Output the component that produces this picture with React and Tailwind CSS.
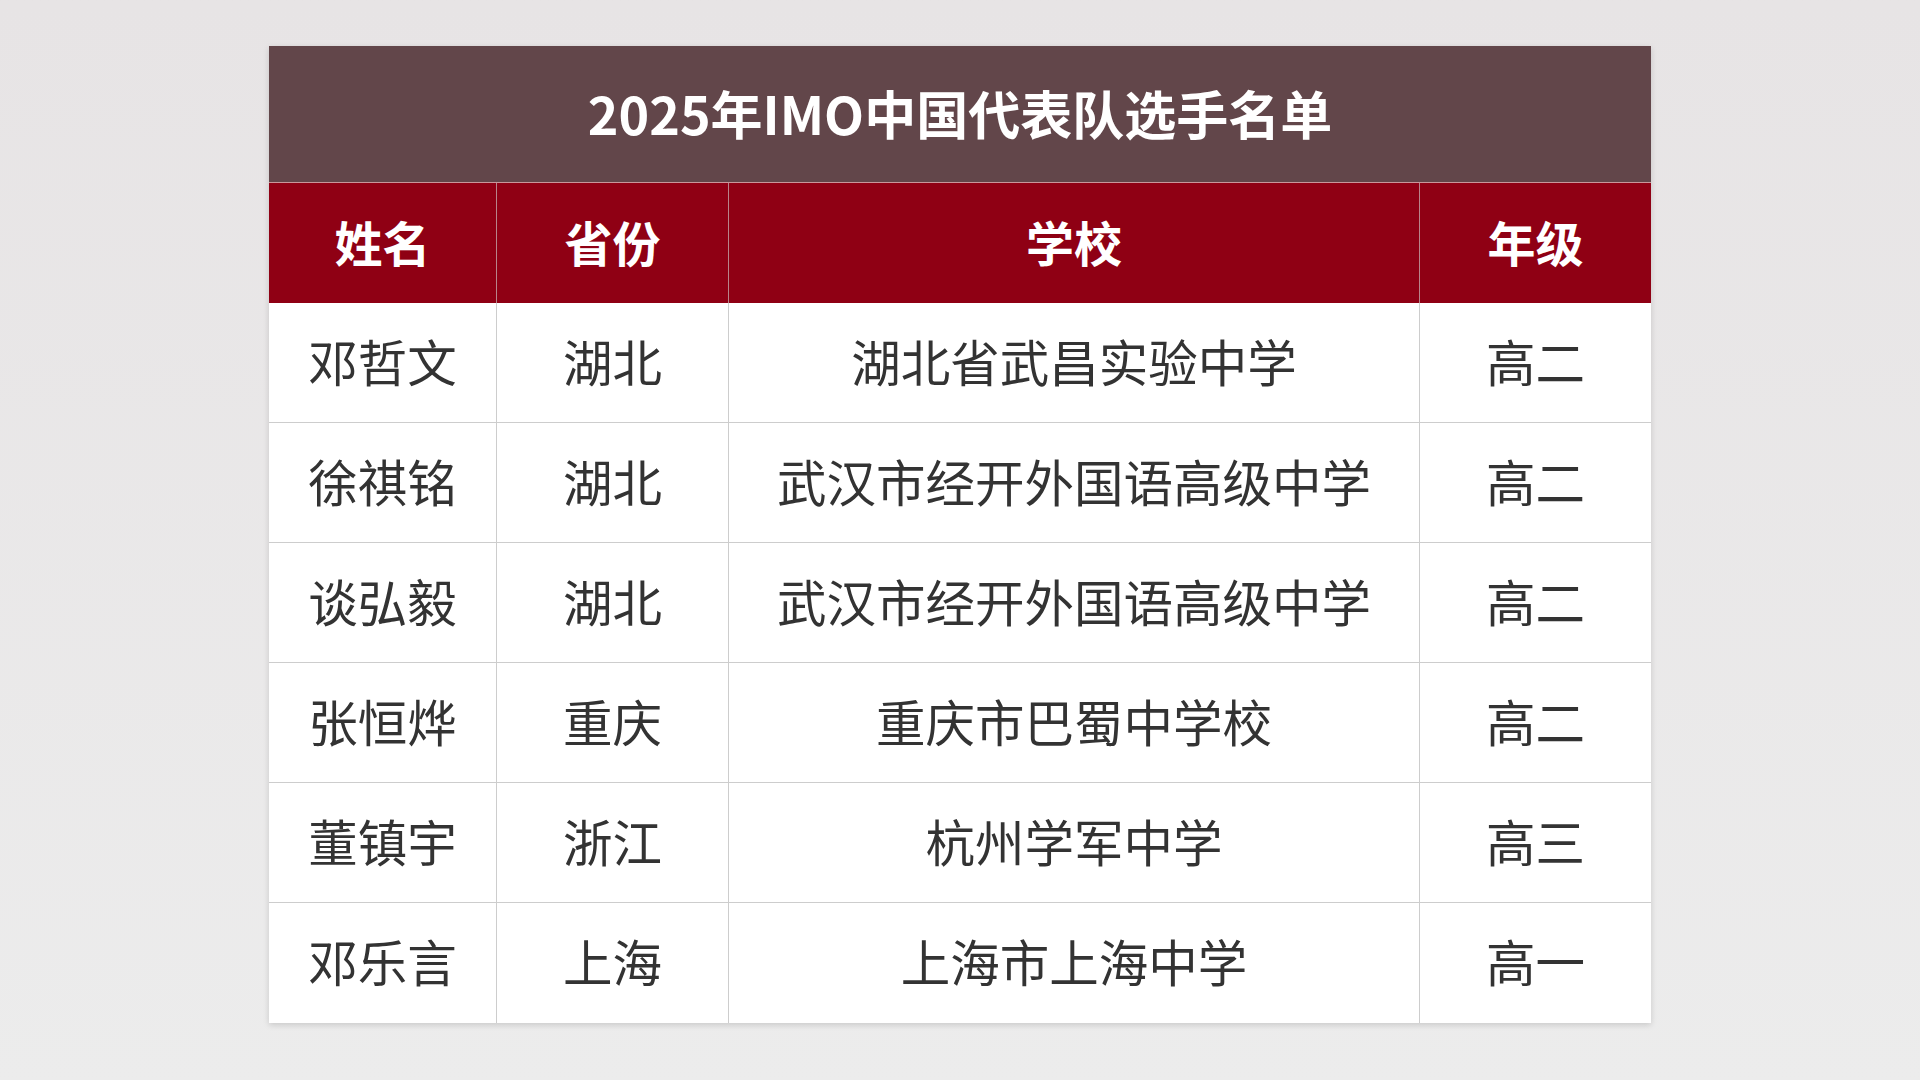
import React from "react";

const rows = [
  ["邓哲文", "湖北", "湖北省武昌实验中学", "高二"],
  ["徐祺铭", "湖北", "武汉市经开外国语高级中学", "高二"],
  ["谈弘毅", "湖北", "武汉市经开外国语高级中学", "高二"],
  ["张恒烨", "重庆", "重庆市巴蜀中学校", "高二"],
  ["董镇宇", "浙江", "杭州学军中学", "高三"],
  ["邓乐言", "上海", "上海市上海中学", "高一"],
];

const cols = "grid grid-cols-[228px_232px_691px_231px]";

export default function App() {
  return (
    <div
      className="w-[1920px] h-[1080px] flex justify-center pt-[46px] bg-gradient-to-b from-[#e7e4e5] to-[#ececec]"
      style={{ fontFamily: '"Noto Sans CJK SC", "Noto Sans", sans-serif' }}
    >
      <div className="w-[1382px] h-[977px] flex flex-col shadow-[0_2px_6px_rgba(0,0,0,0.15)]">
        <div className="h-[136px] pb-[3px] bg-[#62464a] flex items-center justify-center text-white text-[52px] font-bold leading-none">
          2025年IMO中国代表队选手名单
        </div>
        <div className={`${cols} h-[121px] bg-[#8f0014] border-t border-[#c9979b] text-white text-[48px] font-bold leading-none`}>
          {["姓名", "省份", "学校", "年级"].map((h, i) => (
            <div
              key={h}
              className={`flex items-center justify-center pb-[4px] ${i < 3 ? "border-r border-[#b8848a]" : ""}`}
            >
              {h}
            </div>
          ))}
        </div>
        {rows.map((r, ri) => (
          <div
            key={ri}
            className={`${cols} h-[120px] bg-white text-[#333333] text-[49.5px] leading-none ${ri < rows.length - 1 ? "border-b border-[#cdcdcd]" : ""}`}
          >
            {r.map((c, i) => (
              <div
                key={i}
                className={`flex items-center justify-center pb-[4px] ${i < 3 ? "border-r border-[#cdcdcd]" : ""}`}
              >
                {c}
              </div>
            ))}
          </div>
        ))}
      </div>
    </div>
  );
}
